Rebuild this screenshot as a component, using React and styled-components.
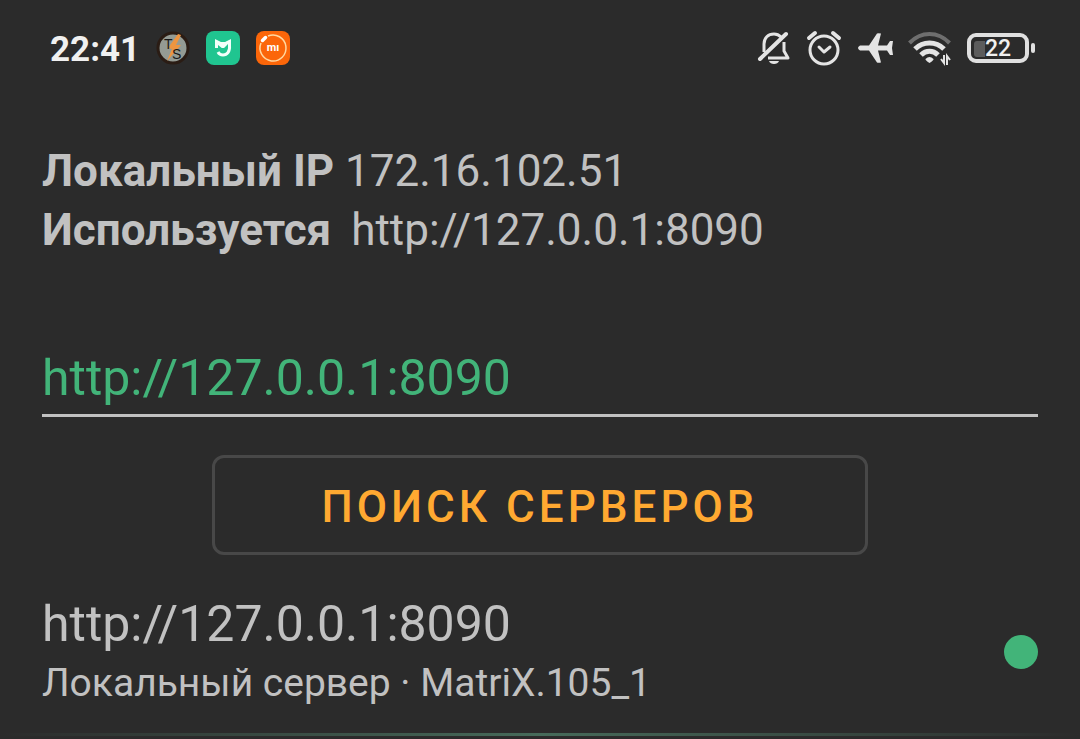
import styled, { createGlobalStyle } from 'styled-components';
import { useState } from 'react';

const servers = [
  {
    url: 'http://127.0.0.1:8090',
    info: 'Локальный сервер · MatriX.105_1',
    online: true,
  },
];

const TorrServeIcon = () => (
  <svg width="34" height="34" viewBox="0 0 34 34" aria-hidden="true">
    <circle cx="17" cy="17" r="15" fill="#949b94" stroke="#2a1c14" strokeWidth="3" />
    <path d="M22 3 L12 17 L16 18 L11 30 L25 14 L20 14 L25 4 Z" fill="#ee9540" />
    <StyledLogoText x="8" y="18" fontSize="14">T</StyledLogoText>
    <StyledLogoText x="16" y="28" fontSize="14">S</StyledLogoText>
  </svg>
);

const HomeIcon = () => (
  <svg width="34" height="34" viewBox="0 0 34 34" aria-hidden="true">
    <rect width="34" height="34" rx="8" fill="#20c590" />
    <path
      d="M9 8 L15 11 H19 L25 8 V17 H9 Z"
      fill="#f2fffa"
    />
    <path
      d="M23.500 14 C24 21 21 24 17 24 C15 24 13 23 12 21"
      fill="none"
      stroke="#f2fffa"
      strokeWidth="3"
    />
    <path d="M12 14 L17 18 L22 13 V17 L18 21 L12 18 Z" fill="#20c590" />
  </svg>
);

const MiIcon = () => (
  <svg width="34" height="34" viewBox="0 0 34 34" aria-hidden="true">
    <rect width="34" height="34" rx="8" fill="#fb6609" />
    <path
      d="M12 5 A13 13 0 1 1 5 12"
      fill="none"
      stroke="#ffd8a0"
      strokeWidth="1.500"
    />
    <path d="M6.500 9.500 L9.500 6.500" stroke="#fff" strokeWidth="3.500" strokeLinecap="round" />
    <StyledMiText x="17" y="20" textAnchor="middle">mı</StyledMiText>
  </svg>
);

const BellOffIcon = () => (
  <svg width="34" height="36" viewBox="0 0 34 36" fill="none" aria-hidden="true">
    <path
      d="M7 22 V14 C7 8 11 4 17 4 C20 4 22 5 24 7 M27 12 V21 L31 28 H11"
      stroke="#e4e4e4"
      strokeWidth="3"
      strokeLinejoin="round"
    />
    <path d="M3 29 L29 4" stroke="#e4e4e4" strokeWidth="4" strokeLinecap="round" />
    <path d="M12 31 H22 C21 35 13 35 12 31 Z" fill="#e4e4e4" />
  </svg>
);

const AlarmIcon = () => (
  <svg width="36" height="36" viewBox="0 0 36 36" fill="none" aria-hidden="true">
    <g stroke="#e4e4e4" strokeWidth="3" strokeLinecap="round" strokeLinejoin="round">
      <circle cx="18" cy="20" r="14" />
      <path d="M13 17 L18 22 L24 17" />
    </g>
    <path
      d="M3 8 L9 3 M27 3 L33 8"
      stroke="#e4e4e4"
      strokeWidth="4"
      strokeLinecap="round"
    />
  </svg>
);

const PlaneIcon = () => (
  <svg width="36" height="32" viewBox="0 0 36 32" aria-hidden="true">
    <path
      d="M3 13.500 H12 L20 1.500 Q21 1 24 1.500 L21 13.500 H30 L33 9 H36 L35 16 L36 23 H33 L30 18.500 H21 L24 30.500 Q21 31 20 30.500 L12 18.500 H3 Q-1 16 3 13.500 Z"
      fill="#e4e4e4"
    />
  </svg>
);

const WifiIcon = () => (
  <svg width="44" height="36" viewBox="0 0 44 36" fill="none" aria-hidden="true">
    <path d="M1.500 13 C13 1 30 1 41.500 13" stroke="#6e6e6e" strokeWidth="4" />
    <path d="M7 19 C15 11 28 11 36 19" stroke="#e4e4e4" strokeWidth="5" />
    <path d="M13 25 C18 20 25 20 30 25" stroke="#e4e4e4" strokeWidth="5" />
    <path d="M17.500 29 Q21.500 25 25.500 29 Q26 30 21.500 33 Q17 30 17.500 29 Z" fill="#e4e4e4" />
    <path d="M33 29 L36 33 V25 M39 35 V26 L42 30" stroke="#e4e4e4" strokeWidth="2" />
  </svg>
);

const App = () => {
  const [host, setHost] = useState('http://127.0.0.1:8090');

  return (
    <>
      <GlobalStyle />
      <StyledStatusBar>
        <StyledGroup $gap={16}>
          <StyledTime>22:41</StyledTime>
          <TorrServeIcon />
          <HomeIcon />
          <MiIcon />
        </StyledGroup>
        <StyledGroup $gap={15}>
          <BellOffIcon />
          <AlarmIcon />
          <PlaneIcon />
          <WifiIcon />
          <StyledBattery>
            <StyledBatteryBody>
              <StyledCharge />
              22
            </StyledBatteryBody>
            <StyledBatteryTip />
          </StyledBattery>
        </StyledGroup>
      </StyledStatusBar>
      <StyledMain>
        <StyledInfo>
          <div>
            <b>Локальный IP</b> 172.16.102.51
          </div>
          <StyledUsed>
            <b>Используется</b>
            <span>http://127.0.0.1:8090</span>
          </StyledUsed>
        </StyledInfo>
        <StyledInput
          type="text"
          aria-label="Адрес сервера"
          value={host}
          onChange={(e) => setHost(e.target.value)}
        />
        <StyledButton type="button">ПОИСК СЕРВЕРОВ</StyledButton>
        <StyledList>
          {servers.map((server) => (
            <StyledServer key={server.url}>
              <div>
                <StyledUrl>{server.url}</StyledUrl>
                <StyledDetails>{server.info}</StyledDetails>
              </div>
              <StyledDot $online={server.online} />
            </StyledServer>
          ))}
        </StyledList>
      </StyledMain>
      <StyledDivider />
    </>
  );
};

export default App;

const GlobalStyle = createGlobalStyle`
  * {
    box-sizing: border-box;
  }
  body {
    margin: 0;
    background-color: #2b2b2b;
    color: #c1c1c1;
    font-family: Roboto, "Liberation Sans", sans-serif;
  }
`;

const StyledStatusBar = styled.header`
  display: flex;
  justify-content: space-between;
  align-items: center;
  height: 96px;
  padding: 0 45px 0 50px;
`;

const StyledGroup = styled.div`
  display: flex;
  align-items: center;
  gap: ${({ $gap }) => $gap}px;
`;

const StyledTime = styled.span`
  padding-top: 2px;
  color: #f0f0f0;
  font-size: 35px;
  font-weight: 700;
`;

const StyledLogoText = styled.text`
  fill: #181818;
  font-family: "Liberation Sans", sans-serif;
`;

const StyledMiText = styled.text`
  fill: #fff;
  font-size: 11px;
  font-weight: 700;
`;

const StyledBattery = styled.div`
  display: flex;
  align-items: center;
  gap: 2px;
`;

const StyledBatteryBody = styled.div`
  display: flex;
  align-items: center;
  width: 62px;
  height: 30px;
  padding: 1px 0 0 3px;
  border: 4px solid #e0e0e0;
  border-radius: 9px;
  color: #f0f0f0;
  font-size: 23px;
  font-weight: 500;
`;

const StyledCharge = styled.span`
  width: 11px;
  height: 16px;
  border-radius: 3px 0 0 3px;
  background-color: #5c5c5c;
`;

const StyledBatteryTip = styled.span`
  width: 4px;
  height: 10px;
  border-radius: 2px;
  background-color: #e0e0e0;
`;

const StyledMain = styled.main`
  display: flex;
  flex-direction: column;
  padding: 46px 42px 22px;
`;

const StyledInfo = styled.section`
  font-size: 44px;
  line-height: 59px;
`;

const StyledUsed = styled.div`
  display: flex;
  gap: 20px;
`;

const StyledInput = styled.input`
  width: 100%;
  height: 68px;
  margin-top: 89px;
  padding: 0 0 7px;
  border: 0;
  border-bottom: 3px solid #c1c1c1;
  border-radius: 0;
  outline: 0;
  background: none;
  color: #42b479;
  font-family: inherit;
  font-size: 50px;
`;

const StyledButton = styled.button`
  align-self: center;
  height: 100px;
  margin-top: 38px;
  padding: 4px 106px 0;
  border: 3px solid #484848;
  border-radius: 12px;
  background: none;
  color: #ffa931;
  font-family: inherit;
  font-size: 44px;
  font-weight: 500;
  letter-spacing: 4px;
  cursor: pointer;
`;

const StyledList = styled.ul`
  margin: 38px 0 0;
  padding: 0;
  list-style: none;
`;

const StyledServer = styled.li`
  display: flex;
  justify-content: space-between;
  align-items: center;
`;

const StyledUrl = styled.div`
  font-size: 50px;
  line-height: 62px;
`;

const StyledDetails = styled.div`
  font-size: 39px;
  line-height: 56px;
`;

const StyledDot = styled.span`
  width: 34px;
  height: 34px;
  border-radius: 50%;
  background-color: ${({ $online }) => ($online ? '#42b479' : '#6e6e6e')};
`;

const StyledDivider = styled.div`
  height: 3px;
  background: linear-gradient(to right, transparent, #466b5a, transparent);
`;
